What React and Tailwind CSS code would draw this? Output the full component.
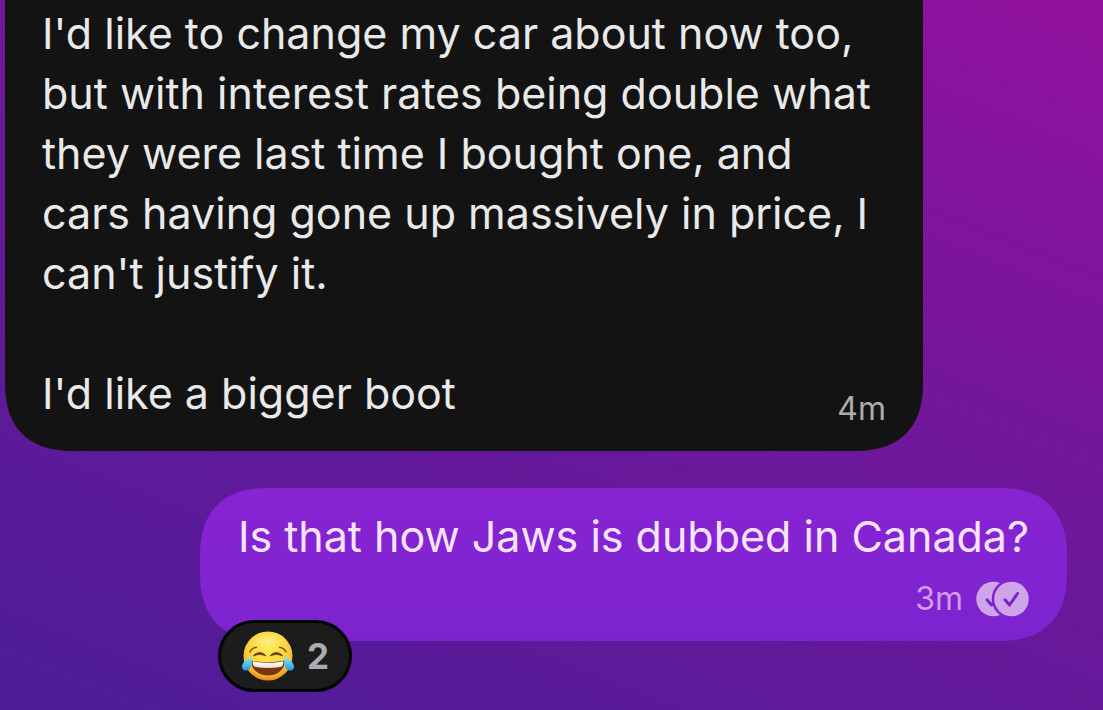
const messages = [
  {
    id: 1,
    text: "I'd like to change my car about now too, but with interest rates being double what they were last time I bought one, and cars having gone up massively in price, I can't justify it.",
    lastLine: "I'd like a bigger boot",
    time: '4m',
  },
  { id: 2, text: 'Is that how Jaws is dubbed in Canada?', time: '3m', reactions: 2 },
];

function ReadReceipt() {
  return (
    <svg width="54" height="36" viewBox="0 0 54 36" fill="none" role="img" aria-label="Read">
      <defs>
        <mask id="behind">
          <rect width="54" height="36" fill="white" />
          <circle cx="36.500" cy="18" r="19.800" fill="black" />
        </mask>
      </defs>
      <g mask="url(#behind)">
        <circle cx="18.500" cy="18" r="17.300" fill="#cfa5ea" />
        <path d="M12 18.800l4.500 5.200 8-11.500" stroke="#7a22c8" strokeWidth="3" strokeLinecap="round" strokeLinejoin="round" />
      </g>
      <circle cx="36.500" cy="18" r="17.300" fill="#cfa5ea" />
      <path d="M30 18.800l4.500 5.200 8-11.500" stroke="#7a22c8" strokeWidth="3" strokeLinecap="round" strokeLinejoin="round" />
    </svg>
  );
}

function JoyEmoji() {
  return (
    <svg width="54" height="52" viewBox="0 0 54 52" role="img" aria-label="Face with tears of joy">
      <defs>
        <radialGradient id="face" cx="0.5" cy="0.36" r="0.66">
          <stop offset="0" stopColor="#ffe94f" />
          <stop offset="0.6" stopColor="#fcd440" />
          <stop offset="0.82" stopColor="#f6b22e" />
          <stop offset="1" stopColor="#e07f16" />
        </radialGradient>
        <radialGradient id="shine" cx="0.5" cy="0.5" r="0.5">
          <stop offset="0" stopColor="#fff9b0" />
          <stop offset="1" stopColor="#fff3a0" stopOpacity="0" />
        </radialGradient>
        <linearGradient id="tear" x1="0" y1="0" x2="0" y2="1">
          <stop offset="0" stopColor="#9be5fb" />
          <stop offset="0.5" stopColor="#4fc4f2" />
          <stop offset="1" stopColor="#2196dd" />
        </linearGradient>
        <linearGradient id="teeth" x1="0" y1="0" x2="0" y2="1">
          <stop offset="0" stopColor="#ffffff" />
          <stop offset="1" stopColor="#e4dedb" />
        </linearGradient>
      </defs>
      <circle cx="27" cy="26" r="24.5" fill="url(#face)" />
      <ellipse cx="27" cy="11" rx="18" ry="9" fill="url(#shine)" opacity="0.6" />
      <path d="M9 22c1-2.500 3.300-4.300 6.500-4.800M45 22c-1-2.500-3.300-4.300-6.500-4.800" fill="none" stroke="#8a5410" strokeWidth="1.500" strokeLinecap="round" />
      <path d="M12.500 26c2.500-4.500 9.500-4.500 12.500 0-4-2-8.500-2-12.500 0zM41.500 26c-2.500-4.500-9.500-4.500-12.500 0 4-2 8.500-2 12.500 0z" fill="#684014" stroke="#684014" strokeWidth="1" strokeLinejoin="round" />
      <path d="M10.500 30.500c11 2.300 22 2.300 33 0C44.300 39 37 45.500 27 45.500S9.700 39 10.500 30.500z" fill="#74360c" />
      <path d="M11.700 31.200c10 2 20.600 2 30.600 0 .2 2.900-.7 4.800-2 5.600-8.500 1.600-18 1.600-26.600 0-1.300-.8-2.200-2.700-2-5.600z" fill="url(#teeth)" />
      <path d="M10.500 26.500C7 28 1 32.500 1 36.500 1 39.500 3.200 41 5.700 40.500c4.700-.8 5.300-6.500 4.800-14z" fill="url(#tear)" />
      <path d="M43.500 26.500C47 28 53 32.500 53 36.500c0 3-2.200 4.500-4.700 4-4.700-.8-5.300-6.500-4.800-14z" fill="url(#tear)" />
    </svg>
  );
}

export default function App() {
  const [incoming, outgoing] = messages;

  return (
    <main className="min-h-screen overflow-hidden bg-linear-[22deg] from-[#4d1d98] via-[#6b189a] to-[#92119d] pl-[5px] pr-9 font-['Inter',sans-serif] text-[43px] leading-[60px]">
      {/* Incoming */}
      <article className="w-full max-w-[918px] rounded-b-[70px] bg-[#131313] px-[37px] pt-[3px] pb-7 text-[#e9e9e9] [corner-shape:superellipse(1.3)]">
        <p>{incoming.text}</p>
        <div className="mt-[60px] flex items-end justify-between">
          <p>{incoming.lastLine}</p>
          <time className="-mb-1 text-[32px] leading-9 text-[#adadad]">{incoming.time}</time>
        </div>
      </article>

      {/* Outgoing */}
      <div className="ml-auto mt-[37px] w-fit">
        <article className="rounded-[70px] bg-linear-to-b from-[#8823d2] to-[#7c23d0] px-[38px] pt-[18px] pb-6 text-[#f8e3ff] [corner-shape:superellipse(1.3)]">
          <p>{outgoing.text}</p>
          <div className="mt-[15px] flex items-center justify-end gap-3">
            <time className="text-[32px] leading-9 text-[#d29cef]">{outgoing.time}</time>
            <ReadReceipt />
          </div>
        </article>
        <button
          type="button"
          className="relative -mt-[21px] ml-[18px] flex h-[72px] items-center gap-3 rounded-full border-3 border-black bg-[#1c1c1c] px-5 text-[35px] font-bold text-[#acacae]"
        >
          <JoyEmoji />
          <span>{outgoing.reactions}</span>
        </button>
      </div>
    </main>
  );
}
